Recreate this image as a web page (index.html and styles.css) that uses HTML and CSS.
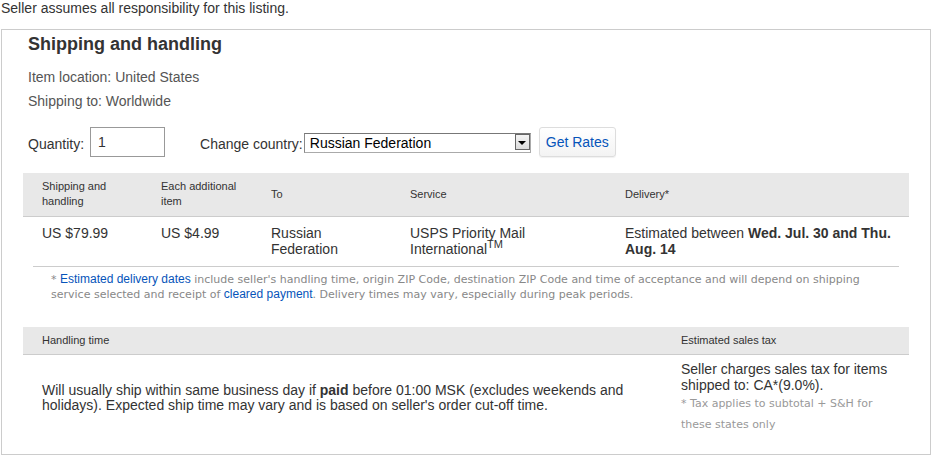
FILE: index.html
```html
<!DOCTYPE html>
<html lang="en">
<head>
  <meta charset="utf-8">
  <link rel="stylesheet" href="styles.css">
</head>
<body>
  <div class="notice">Seller assumes all responsibility for this listing.</div>

  <div class="shipping-box">
    <h2 class="title">Shipping and handling</h2>
    <div class="info">
      <p>Item location: United States</p>
      <p>Shipping to: Worldwide</p>
    </div>

    <div class="rates-form">
      <label class="field-label" for="qty">Quantity:</label>
      <input class="qty-input" id="qty" type="text" value="1">
      <label class="field-label country-label" for="country">Change country:</label>
      <span class="select-wrap">
        <select class="country-select" id="country">
          <option>Russian Federation</option>
        </select>
      </span>
      <button class="rates-btn">Get Rates</button>
    </div>

    <table class="ship-table">
      <thead>
        <tr>
          <th class="col-cost">Shipping and<br>handling</th>
          <th class="col-add">Each additional<br>item</th>
          <th class="col-to">To</th>
          <th class="col-service">Service</th>
          <th class="col-delivery">Delivery*</th>
        </tr>
      </thead>
      <tbody>
        <tr>
          <td>US $79.99</td>
          <td>US $4.99</td>
          <td>Russian<br>Federation</td>
          <td>USPS Priority Mail<br>International<sup>TM</sup></td>
          <td>Estimated between <b>Wed. Jul. 30 and Thu. Aug. 14</b></td>
        </tr>
      </tbody>
    </table>

    <div class="footnote">
      * <a href="#">Estimated delivery dates</a> include seller's handling time, origin ZIP Code, destination ZIP Code and time of acceptance and will depend on shipping service selected and receipt of <a href="#">cleared payment</a>. Delivery times may vary, especially during peak periods.
    </div>

    <table class="ship-table handling-table">
      <thead>
        <tr>
          <th>Handling time</th>
          <th class="col-tax">Estimated sales tax</th>
        </tr>
      </thead>
      <tbody>
        <tr>
          <td class="handling-text">Will usually ship within same business day if <b>paid</b> before 01:00 MSK (excludes weekends and holidays). Expected ship time may vary and is based on seller's order cut-off time.</td>
          <td class="tax-text">
            Seller charges sales tax for items shipped to: CA*(9.0%).
            <div class="tax-note">* Tax applies to subtotal + S&amp;H for these states only</div>
          </td>
        </tr>
      </tbody>
    </table>
  </div>
</body>
</html>
```

FILE: styles.css
```css
body {
  margin: 0;
  font-family: Arial, "Liberation Sans", sans-serif;
  font-size: 14px;
  color: #333;
  background: #fff;
}

.notice {
  line-height: 16px;
  padding-left: 1px;
}

.shipping-box {
  margin: 13px 1px 0 1px;
  border: 1px solid #ccc;
  padding: 0 21px 11px 21px;
}

.title {
  margin: 0;
  padding-left: 5px;
  font-size: 18px;
  line-height: 28px;
  font-weight: bold;
  color: #333;
}

.info {
  margin-top: 7px;
  padding-left: 5px;
  color: #555;
}

.info p {
  margin: 0;
  line-height: 24px;
}

.rates-form {
  display: flex;
  align-items: center;
  margin-top: 14px;
  padding-left: 5px;
  height: 30px;
}

.field-label {
  color: #333;
  margin-right: 6px;
  padding-top: 4px;
}

.country-label {
  margin-left: 35px;
  margin-right: 1px;
}

.qty-input {
  box-sizing: border-box;
  width: 75px;
  height: 30px;
  border: 1px solid #999;
  padding: 0 7px;
  font-family: Arial, "Liberation Sans", sans-serif;
  font-size: 14px;
  color: #333;
  margin: 0;
}

.select-wrap {
  position: relative;
  display: inline-block;
  margin-top: 2px;
}

.country-select {
  box-sizing: border-box;
  -webkit-appearance: none;
  appearance: none;
  width: 227px;
  height: 20px;
  margin: 0;
  padding: 0 20px 0 5px;
  border: 1px solid #aaa;
  border-top-color: #777;
  border-left-color: #888;
  border-radius: 0;
  background: #fff;
  font-family: Arial, "Liberation Sans", sans-serif;
  font-size: 14px;
  color: #000;
}

.select-wrap::after {
  content: "";
  position: absolute;
  right: 1px;
  top: 1px;
  width: 15px;
  height: 16px;
  border: 1px solid #666;
  background: linear-gradient(#f4f4f4, #dcdcdc);
  box-sizing: border-box;
  pointer-events: none;
}

.select-wrap::before {
  content: "";
  position: absolute;
  right: 5px;
  top: 8px;
  border-left: 4px solid transparent;
  border-right: 4px solid transparent;
  border-top: 4px solid #000;
  z-index: 1;
  pointer-events: none;
}

.rates-btn {
  box-sizing: border-box;
  margin-left: 8px;
  width: 77px;
  height: 30px;
  border: 1px solid #ddd;
  border-radius: 3px;
  background: linear-gradient(#fff, #f3f3f3);
  box-shadow: 0 1px 1px rgba(0, 0, 0, 0.06);
  color: #0654ba;
  font-family: Arial, "Liberation Sans", sans-serif;
  font-size: 14px;
  padding: 0;
  cursor: pointer;
}

.ship-table {
  width: 100%;
  border-collapse: collapse;
  margin-top: 16px;
  table-layout: fixed;
}

.ship-table th {
  background: #e8e8e8;
  border-bottom: 1px solid #ccc;
  font-size: 11px;
  font-weight: normal;
  text-align: left;
  line-height: 15px;
  height: 43px;
  box-sizing: border-box;
  padding: 0 10px 0 19px;
  vertical-align: middle;
}

.ship-table td {
  padding: 8px 10px 9px 19px;
  line-height: 16px;
  vertical-align: top;
  color: #333;
}

.col-cost { width: 119px; }
.col-add { width: 110px; }
.col-to { width: 139px; }
.col-service { width: 215px; }

.ship-table sup {
  font-size: 11px;
  line-height: 0;
}

.footnote {
  margin: 0 10px;
  border-top: 1px solid #ccc;
  padding: 5px 10px 0 18px;
  font-family: Verdana, "DejaVu Sans", sans-serif;
  font-size: 11px;
  line-height: 15px;
  color: #888;
}

.footnote a {
  font-family: Arial, "Liberation Sans", sans-serif;
  font-size: 12px;
  color: #0654ba;
  text-decoration: none;
}

.handling-table {
  margin-top: 25px;
}

.handling-table th {
  height: 28px;
}

.handling-table .col-tax {
  width: 247px;
}

.handling-table .handling-text {
  vertical-align: middle;
  line-height: 15px;
  padding-top: 6px;
}

.handling-table .tax-text {
  padding-top: 6px;
  padding-bottom: 8px;
}

.tax-note {
  font-family: Verdana, "DejaVu Sans", sans-serif;
  font-size: 11px;
  line-height: 21px;
  color: #999;
}
```
